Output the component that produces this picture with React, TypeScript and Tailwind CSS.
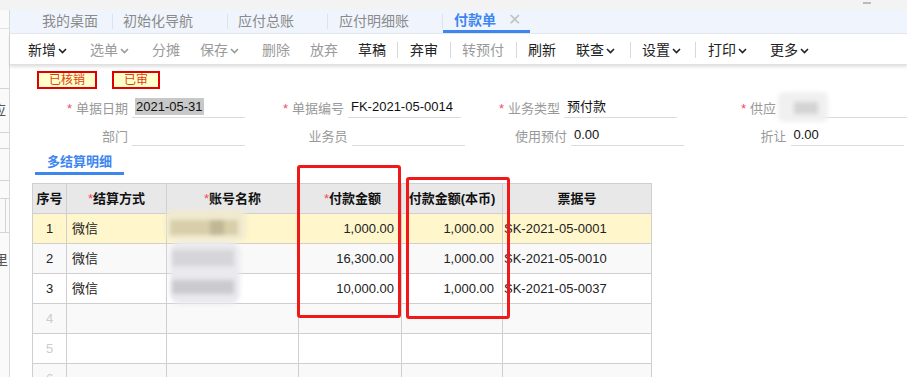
import React from "react";

const CJK = '"Liberation Sans", "Noto Sans CJK SC", sans-serif';

function Caret() {
  return (
    <svg width="9" height="6" viewBox="0 0 9 6" className="ml-[2px] mt-[1px]">
      <path d="M1 1 L4.5 4.5 L8 1" fill="none" stroke="currentColor" strokeWidth="1.6" />
    </svg>
  );
}

const tools: { t: string; dis?: boolean; caret?: boolean; w: number; sep?: number }[] = [
  { t: "新增", caret: true, w: 62 },
  { t: "选单", dis: true, caret: true, w: 62 },
  { t: "分摊", dis: true, w: 48 },
  { t: "保存", dis: true, caret: true, w: 62 },
  { t: "删除", dis: true, w: 48 },
  { t: "放弃", dis: true, w: 48 },
  { t: "草稿", w: 39, sep: 13 },
  { t: "弃审", w: 40, sep: 12 },
  { t: "转预付", dis: true, w: 54, sep: 12 },
  { t: "刷新", w: 48 },
  { t: "联查", caret: true, w: 54, sep: 12 },
  { t: "设置", caret: true, w: 53, sep: 13 },
  { t: "打印", caret: true, w: 62 },
  { t: "更多", caret: true, w: 62 },
];

function Field({ label, req, value, sel }: { label: string; req?: boolean; value?: string; sel?: boolean }) {
  return (
    <div className="flex w-[220px] items-end">
      <div className="w-[103px] text-right text-[13px] leading-[18px] text-[#999] pr-[4px]">
        {req && <span className="text-[#f24a6a] mr-[4px]">*</span>}
        {label}
      </div>
      <div className="w-[113px] border-b border-[#dcdcdc] h-[22px] flex items-center pl-[3px]">
        {value && (
          <span className={"text-[13px] leading-[17px] text-[#111] " + (sel ? "bg-[#c8c8c8] px-[1px]" : "")}>{value}</span>
        )}
      </div>
    </div>
  );
}

const rows = [
  { n: "1", m: "微信", a: "1,000.00", b: "1,000.00", c: "SK-2021-05-0001", bg: "bg-[#fff6cc]" },
  { n: "2", m: "微信", a: "16,300.00", b: "1,000.00", c: "SK-2021-05-0010", bg: "bg-[#f9f9f9]" },
  { n: "3", m: "微信", a: "10,000.00", b: "1,000.00", c: "SK-2021-05-0037", bg: "bg-white" },
  { n: "4", m: "", a: "", b: "", c: "", bg: "bg-[#f9f9f9]" },
  { n: "5", m: "", a: "", b: "", c: "", bg: "bg-white" },
  { n: "6", m: "", a: "", b: "", c: "", bg: "bg-[#f9f9f9]" },
];

const cols = ["w-[34px]", "w-[100px]", "w-[132px]", "w-[103px]", "w-[101px]", "w-[149px]"];

export default function App() {
  return (
    <div className="relative w-[907px] h-[377px] overflow-hidden bg-white flex flex-col" style={{ fontFamily: CJK }}>
      <div className="h-[10px] bg-[#f3f3f3] shrink-0 relative">
        <div className="absolute left-[863px] top-[2px] w-[8px] h-[2px] bg-[#bbb]" />
      </div>
      <div className="flex flex-1 min-h-0">
        {/* window behind */}
        <div className="w-[10px] shrink-0 bg-[#fafafa] border-r border-[#d8d8d8] relative overflow-hidden text-[14px] text-[#555]">
          <div className="absolute top-[18px] left-0 w-full border-t border-[#e2e2e2]" />
          <div className="absolute top-[78px] left-0 w-full border-t border-[#d4d4d4]" />
          <div className="absolute top-[92px] left-[-8px] leading-[16px]">应</div>
          <div className="absolute top-[122px] left-0 w-full border-t border-[#d4d4d4]" />
          <div className="absolute top-[138px] left-0 w-full border-t border-[#d4d4d4]" />
          <div className="absolute top-[170px] left-0 w-full border-t border-[#d4d4d4]" />
          <div className="absolute top-[188px] left-0 w-full border-t border-[#d4d4d4]" />
          <div className="absolute top-[188px] left-[5px] h-[34px] border-l border-[#d4d4d4]" />
          <div className="absolute top-[222px] left-0 w-full border-t border-[#d4d4d4]" />
          <div className="absolute top-[242px] left-[-6px] leading-[16px]">里</div>
        </div>
        <div className="flex-1 flex flex-col min-w-0">
          {/* tab bar */}
          <div className="h-[24px] bg-[#f0f5fd] border-b border-[#e3e8ef] flex items-stretch text-[14px] text-[#8a8a8a] shrink-0">
            <div className="w-[103px] flex items-center pl-[32px] border-r border-[#dde3ea] my-[4px]">我的桌面</div>
            <div className="w-[115px] flex items-center pl-[10px] border-r border-[#dde3ea] my-[4px]">初始化导航</div>
            <div className="w-[100px] flex items-center pl-[10px] border-r border-[#dde3ea] my-[4px]">应付总账</div>
            <div className="w-[115px] flex items-center pl-[11px] border-r border-[#dde3ea] my-[4px]">应付明细账</div>
            <div className="w-[87px] flex items-center pl-[11px] border-b-[3px] border-[#3d86f0] text-[#3d86f0] font-bold relative">
              付款单
              <span className="ml-[12px] text-[#c2c2c2] font-normal text-[16px]">✕</span>
            </div>
          </div>
          {/* toolbar */}
          <div className="h-[31px] bg-white flex items-center pl-[18px] pt-[2px] text-[14px] shadow-[0_2px_3px_rgba(0,0,0,0.12)] border-b border-[#e0e0e0] shrink-0 relative z-10">
            {tools.map((t, i) => (
              <React.Fragment key={i}>
                <div className={"flex items-center shrink-0 " + (t.dis ? "text-[#9a9a9a]" : "text-[#222]")} style={{ width: t.w }}>
                  <span>{t.t}</span>
                  {t.caret && <Caret />}
                </div>
                {t.sep && (
                  <div className="shrink-0 flex items-center" style={{ width: t.sep }}>
                    <span className="w-px h-[16px] bg-[#d8d8d8]" />
                  </div>
                )}
              </React.Fragment>
            ))}
          </div>
          {/* content */}
          <div className="flex-1 relative pl-[19px]">
            {/* badges */}
            <div className="flex gap-[15px] pl-[8px] pt-[6px]">
              <div className="w-[60px] h-[18px] border-2 border-[#e00000] bg-[#ffffcc] text-[#e0400f] text-[12px] leading-[14px] flex items-center justify-center">已核销</div>
              <div className="w-[48px] h-[18px] border-2 border-[#e00000] bg-[#ffffcc] text-[#e0400f] text-[12px] leading-[14px] flex items-center justify-center">已审</div>
            </div>
            {/* form */}
            <div className="flex mt-[7px]">
              <Field label="单据日期" req value="2021-05-31" sel />
              <Field label="单据编号" req value="FK-2021-05-0014" />
              <Field label="业务类型" req value="预付款" />
              <div className="flex w-[260px] items-end">
                <div className="w-[103px] text-right text-[13px] leading-[18px] text-[#999] pr-[4px]">
                  <span className="text-[#f24a6a] mr-[4px]">*</span>供应
                </div>
                <div className="flex-1 border-b border-[#dcdcdc] h-[22px]" />
              </div>
            </div>
            <div className="flex mt-[6px]">
              <Field label="部门" />
              <Field label="业务员" />
              <Field label="使用预付" value="0.00" />
              <Field label="折让" value="0.00" />
            </div>
            {/* section tab */}
            <div className="mt-[6px] ml-[6px] w-[89px] border-b-[3px] border-[#3d86f0] h-[23px] flex items-center justify-center text-[13px] font-bold text-[#3d86f0]">
              多结算明细
            </div>
            {/* table */}
            <div className="mt-[8px] ml-[3px] w-[620px] border-l border-t border-[#cfcfcf] text-[13px]">
              <div className="flex h-[30px] bg-[#e8e8e8] font-bold text-[#111]">
                {["序号", "结算方式", "账号名称", "付款金额", "付款金额(本币)", "票据号"].map((h, i) => (
                  <div key={i} className={cols[i] + " border-r border-b border-[#cfcfcf] flex items-center justify-center whitespace-nowrap " + (i === 3 ? "justify-end pr-[20px]" : "")}>
                    {(i === 1 || i === 2 || i === 3) && <span className="text-[#f24a6a] font-normal">*</span>}
                    {h}
                  </div>
                ))}
              </div>
              {rows.map((r, ri) => (
                <div key={ri} className={"flex h-[30px] text-[#222] " + r.bg}>
                  <div className={cols[0] + " border-r border-b border-[#cfcfcf] flex items-center justify-center " + (r.m ? "text-[#222]" : "text-[#ccc]")}>{r.n}</div>
                  <div className={cols[1] + " border-r border-b border-[#cfcfcf] flex items-center pl-[5px]"}>{r.m}</div>
                  <div className={cols[2] + " border-r border-b border-[#cfcfcf]"} />
                  <div className={cols[3] + " border-r border-b border-[#cfcfcf] flex items-center justify-end pr-[7px]"}>{r.a}</div>
                  <div className={cols[4] + " border-r border-b border-[#cfcfcf] flex items-center justify-end pr-[8px]"}>{r.b}</div>
                  <div className={cols[5] + " border-r border-b border-[#cfcfcf] flex items-center pl-[1px]"}>{r.c}</div>
                </div>
              ))}
            </div>
          </div>
        </div>
      </div>

      {/* mosaic blur over account names */}
      <div className="absolute left-[166px] top-[210px] w-[82px] h-[94px] blur-[2px]">
        <div className="absolute left-0 top-0 w-[80px] h-[30px] bg-[#f1ead0] rounded-[6px]" />
        <div className="absolute left-[4px] top-[10px] w-[68px] h-[15px] bg-[#d8ceaa]" />
        <div className="absolute left-[44px] top-[10px] w-[14px] h-[15px] bg-[#bfb795]" />
        <div className="absolute left-[4px] top-[32px] w-[70px] h-[62px] bg-[#eaeaee] rounded-[10px]" />
        <div className="absolute left-[6px] top-[40px] w-[62px] h-[16px] bg-[#d6d6da]" />
        <div className="absolute left-[6px] top-[70px] w-[62px] h-[14px] bg-[#cacacf]" />
      </div>
      {/* supplier blur */}
      <div className="absolute left-[778px] top-[92px] w-[50px] h-[30px] bg-[#f0f0f0] blur-[2px] rounded-[6px]">
        <div className="absolute left-[16px] top-[10px] w-[24px] h-[12px] bg-[#d4d4d4]" />
      </div>

      {/* red highlight boxes */}
      <div className="absolute left-[297px] top-[165px] w-[104px] h-[153px] border-[3px] border-[#f01818] rounded-[3px]" />
      <div className="absolute left-[406px] top-[177px] w-[104px] h-[142px] border-[3px] border-[#f01818] rounded-[3px]" />
    </div>
  );
}
